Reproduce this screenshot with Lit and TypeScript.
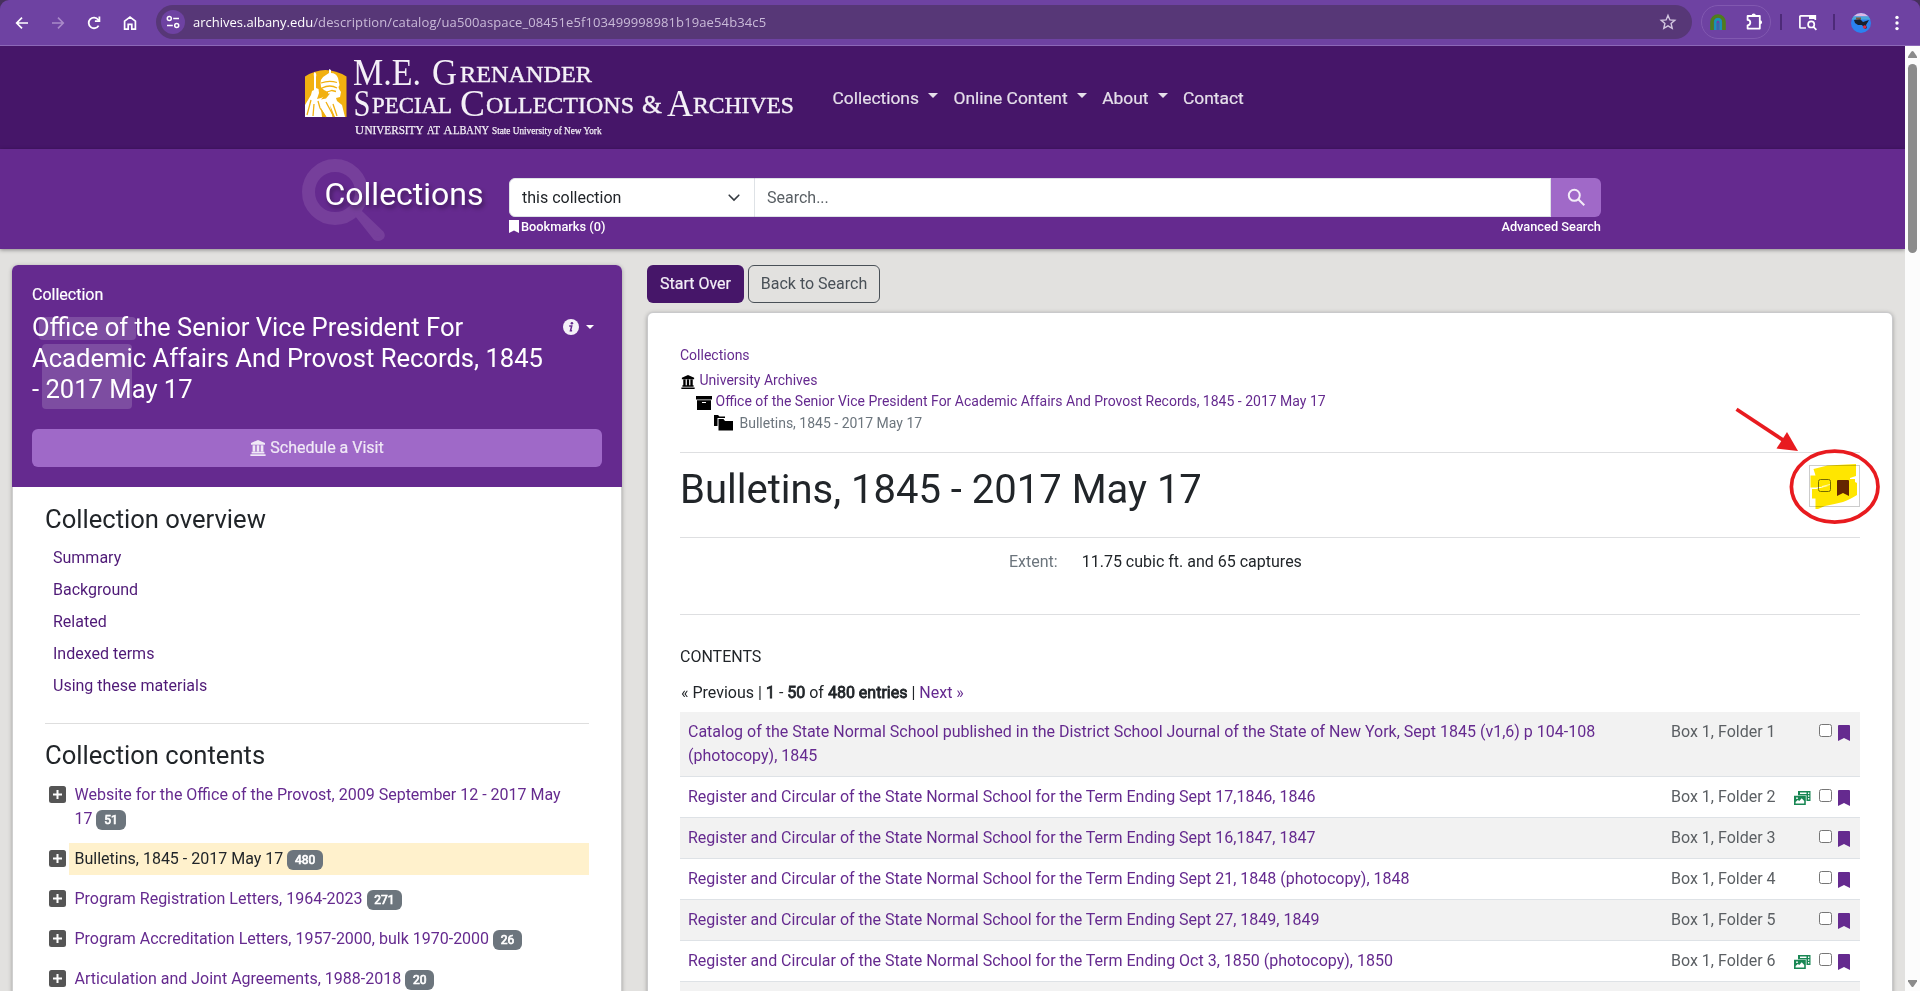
import { LitElement, html, css, svg } from "lit";
import { customElement } from "lit/decorators.js";
import { classMap } from "lit/directives/class-map.js";

interface TreeItem { title: string; count: number; active?: boolean; }
interface FolderRow { title: string; folder: number; online?: boolean; }

const tree: TreeItem[] = [
  { title: "Website for the Office of the Provost, 2009 September 12 - 2017 May 17", count: 51 },
  { title: "Bulletins, 1845 - 2017 May 17", count: 480, active: true },
  { title: "Program Registration Letters, 1964-2023", count: 271 },
  { title: "Program Accreditation Letters, 1957-2000, bulk 1970-2000", count: 26 },
  { title: "Articulation and Joint Agreements, 1988-2018", count: 20 },
];

const prefix = "Register and Circular of the State Normal School for the Term Ending ";
const rows: FolderRow[] = [
  { title: "Catalog of the State Normal School published in the District School Journal of the State of New York, Sept 1845 (v1,6) p 104-108 (photocopy), 1845", folder: 1 },
  { title: prefix + "Sept 17,1846, 1846", folder: 2, online: true },
  { title: prefix + "Sept 16,1847, 1847", folder: 3 },
  { title: prefix + "Sept 21, 1848 (photocopy), 1848", folder: 4 },
  { title: prefix + "Sept 27, 1849, 1849", folder: 5 },
  { title: prefix + "Oct 3, 1850 (photocopy), 1850", folder: 6, online: true },
];

const bookmark = html`<svg class="bm" viewBox="0 0 12 16" width="12" height="16"><path fill="currentColor" d="M1 0h10a1 1 0 0 1 1 1v15l-6-3-6 3V1a1 1 0 0 1 1-1z"/></svg>`;
const check = html`<svg class="ck" viewBox="0 0 13 13" width="13" height="13"><rect x=".5" y=".5" width="12" height="12" rx="2" fill="#fff" stroke="#767676"/></svg>`;
const bank = (w: number) => html`<svg class="bank" viewBox="0 0 16 16" width=${w} height=${w}><path fill="currentColor" d="M8 0l7 3v1.800H1V3zM2.600 5.200h2.700v6.400H2.600zM6.700 5.200h2.600v6.400H6.700zM10.700 5.200h2.700v6.400h-2.700zM1.600 11.800h12.800v1.700H1.600zM.4 14.200h15.200V16H.4z"/></svg>`;

/* Browser toolbar */
@customElement("browser-bar")
export class BrowserBar extends LitElement {
  static styles = css`
    :host { display: block; height: 46px; background: #46305c; }
    .bar { height: 45px; border-bottom: 1px solid #8c68b8; background: #6e42a2; border-radius: 9px 9px 0 0; display: flex; align-items: center; padding-bottom: 0; }
    .bar > * { flex: none; }
    .nav { width: 36px; display: flex; justify-content: center; }
    .navs { display: flex; padding-left: 4px; width: 156px; box-sizing: border-box; height: 44px; align-items: center; }
    .omni { width: 1536px; height: 34px; border-radius: 17px; background: #573777; display: flex; align-items: center; margin-top: -1px; box-sizing: border-box; padding: 0 15px 0 5px; }
    .site { width: 24px; height: 24px; border-radius: 12px; background: #6e42a2; display: flex; align-items: center; justify-content: center; }
    .url { flex: 1; margin-left: 8px; font: 13px/20px "Open Sans", "Noto Sans", sans-serif; color: #c9bad8; letter-spacing: 0.12px; white-space: nowrap; }
    .host { color: #fff; letter-spacing: 0; }
    .pill { margin-left: 9px; height: 32px; margin-top: -1px; border: 1px solid #8158b0; border-radius: 17px; display: flex; align-items: center; justify-content: space-between; padding: 0 6px 0 7px; width: 55px; }
    .sep { width: 2px; height: 16px; background: #4d2a78; margin-left: 9px; margin-top: -1px; }
    .panel { margin-left: 17px; }
    .sep2 { margin-left: 16px; }
    .avatar { margin-left: 16px; }
    .dots { margin-left: 24px; }
    svg { display: block; }
  `;
  render() {
    return html`<div class="bar">
      <div class="navs">
        <div class="nav"><svg width="16" height="16" viewBox="0 0 16 16" fill="none" stroke="#fff" stroke-width="1.7"><path d="M14 8H3M8 2.6L2.7 8 8 13.4"/></svg></div>
        <div class="nav"><svg width="16" height="16" viewBox="0 0 16 16" fill="none" stroke="#a98ac9" stroke-width="1.6"><path d="M2 8h11M8 2.6L13.3 8 8 13.4"/></svg></div>
        <div class="nav"><svg width="16" height="16" viewBox="0 0 16 16" fill="none" stroke="#fff" stroke-width="1.8"><path d="M12.6 10.6A5.3 5.3 0 1 1 12.2 4.7L13 5.6"/><path d="M13.4 1.6v4.5H8.9"/></svg></div>
        <div class="nav"><svg width="16" height="16" viewBox="0 0 16 16" fill="none" stroke="#fff" stroke-width="1.7"><path d="M2.6 14.1V6.2L8 2l5.4 4.2v7.9H9.8V9.4H6.2v4.7z"/></svg></div>
      </div>
      <div class="omni">
        <div class="site"><svg width="16" height="16" viewBox="0 0 16 16" fill="none" stroke="#fff" stroke-width="1.5"><circle cx="4.3" cy="4.6" r="2"/><path d="M8.2 4.6H14M2 11.4h5.8"/><circle cx="11.7" cy="11.4" r="2"/></svg></div>
        <div class="url"><span class="host">archives.albany.edu</span>/description/catalog/ua500aspace_08451e5f103499998981b19ae54b34c5</div>
        <svg width="18" height="18" viewBox="0 0 18 18" fill="none" stroke="#d3c7e0" stroke-width="1.4"><path d="M9 2.4l1.9 4.5 4.9.4-3.7 3.2 1.1 4.8L9 12.8l-4.2 2.5 1.1-4.8-3.7-3.2 4.9-.4z"/></svg>
      </div>
      <div class="pill">
        <svg width="18" height="18" viewBox="0 0 18 18" fill="none"><path d="M3 17V9a6 6 0 0 1 12 0v8" stroke="#4f7d1c" stroke-width="3.6"/><path d="M6.3 17V9a2.7 2.7 0 0 1 5.4 0v8" stroke="#1397b8" stroke-width="2.4"/><path d="M9 10v7" stroke="#1a7bb0" stroke-width="1.4"/></svg>
        <svg width="19" height="18" viewBox="0 0 19 18"><path d="M2.6 3h12.2v12.6H2.6v-3.3a2.6 2.6 0 0 0 0-5.4z" fill="none" stroke="#fff" stroke-width="1.8" stroke-linejoin="round"/><path d="M6.6 2.6a2.1 2.1 0 0 1 4.2 0zM15 7.2a2.1 2.1 0 0 1 0 4.2z" fill="#fff"/></svg>
      </div>
      <div class="sep"></div>
      <svg class="panel" width="18" height="17" viewBox="0 0 18 17" fill="none" stroke="#fff" stroke-width="1.7"><path d="M7 14H1.7a.8.8 0 0 1-.8-.8V2.6a.8.8 0 0 1 .8-.8h14.6V6"/><path d="M10 1h7v4h-7z" fill="#fff" stroke="none"/><circle cx="12.2" cy="10.4" r="3.1"/><path d="M14.4 12.8l3 3"/></svg>
      <div class="sep sep2"></div>
      <svg class="avatar" width="20" height="20" viewBox="0 0 20 20"><defs><clipPath id="a"><circle cx="10" cy="10" r="10"/></clipPath></defs><g clip-path="url(#a)"><path fill="#2b82f0" d="M0 0h20v20H0z"/><path fill="#dcb8e4" d="M0 0h20v3.5H0z"/><path fill="#4aa7d8" d="M0 3.5h20v3H0z"/><path fill="#17202e" d="M3 7l6-1 3 3 6-2-3 5 1 3-2 1-3-4-4 0-3-2z"/><path fill="#7b5a3a" d="M5 4.5h5v2H5z"/><circle cx="13.7" cy="14" r="1.8" fill="#d82c48"/></g></svg>
      <svg class="dots" width="4" height="16" viewBox="0 0 4 16" fill="#fff"><circle cx="2" cy="2.4" r="1.7"/><circle cx="2" cy="8" r="1.7"/><circle cx="2" cy="13.6" r="1.7"/></svg>
    </div>`;
  }
}

/* Site banner and search strip */
@customElement("site-header")
export class SiteHeader extends LitElement {
  static styles = css`
    :host { display: block; font-family: Roboto, sans-serif; position: relative; }
    .top { height: 103px; background: #461669; display: flex; }
    .logo { margin-left: 305px; width: 495px; height: 103px; display: block; flex: none; font-family: "Liberation Serif", serif; }
    nav { display: flex; margin-left: 32.5px; align-items: center; height: 104px; gap: 15px; font-size: 17.4px; color: #e5dfea; -webkit-text-stroke: 0.2px #e5dfea; }
    nav span { display: flex; align-items: center; white-space: nowrap; }
    .caret { margin-left: 9.5px; margin-top: -5px; border: 5px solid transparent; border-top-color: currentColor; border-bottom: 0; }
    .strip { height: 100px; background: #652a8f; display: flex; box-shadow: 0 1px 4px rgba(0,0,0,.4); }
    .title { margin-left: 302px; width: 207px; height: 100px; display: grid; flex: none; }
    .title > * { grid-area: 1 / 1; }
    .title h1 { margin: 27px 0 0 22.5px; font-size: 32px; line-height: 37px; font-weight: 400; color: #fff; text-shadow: 2px 3px 4px rgba(0,0,0,.4); }
    .form { width: 1092px; padding-top: 29px; }
    .row { display: flex; height: 39px; }
    .select { width: 246px; box-sizing: border-box; border: 1px solid #dee2e6; border-radius: 6px 0 0 6px; background: #fff; font-size: 16px; color: #212529; padding: 0 14px 0 12px; display: flex; align-items: center; justify-content: space-between; }
    .input { flex: 1; box-sizing: border-box; border: 1px solid #dee2e6; border-left: 0; background: #fff; color: #595f64; font-size: 16px; padding-left: 12px; display: flex; align-items: center; }
    .go { width: 50px; background: #a069c8; border-radius: 0 6px 6px 0; display: flex; align-items: center; justify-content: center; }
    .below { display: flex; justify-content: space-between; align-items: center; height: 18px; font-size: 12.8px; font-weight: 500; color: #fff; }
    .below span { display: flex; align-items: center; gap: 2px; }
    .below svg { margin-top: 1px; }
  `;
  render() {
    const item = (t: string, c = true) => html`<span>${t}${c ? html`<i class="caret"></i>` : ""}</span>`;
    const word = (x: number, y: number, size: number, len: number, t: string) =>
      svg`<text x=${x} y=${y} font-size=${size} textLength=${len} lengthAdjust="spacingAndGlyphs">${t}</text>`;
    return html`
      <div class="top">
        <svg class="logo" viewBox="305 46 495 103" fill="#f4f0f7">
          <path d="M305 76.500q20-13 41.500 0V117H305z" fill="#f2b010"/>
          <path fill="#fff" d="M305 117v-12l6-10 1-4 2-1v-13q-1-3 .5-5 2.500 1 1.500 5v11l2.500 1 .5 4-2 6 4-1 7-3v-3l-4-2-3-3q-2-9 5-12l3-2v-4l2 1v3q5 0 7 5l1.500 7-1 2 .5 2 2 3-1 5-4 1 1 3 5 4 3 12z"/>
          <path fill="none" stroke="#f2b010" stroke-width="1.300" d="M311 100l-4 15M318 101l2 7 6 9M314 104l-1 12M326 102l8 15M333 104l4 12M321 83q8-3 16-.5M322 88q8-4 15 0M327 92l5-1.500 4 1"/>
          <path fill="#f2b010" d="M326 93.500h4l-4 5-5 1zM321 108l5 9h-4zM330 105l5 12h-2.500z"/>
          ${word(353, 85, 38, 68, "M.E.")}${word(432, 85, 38, 25, "G")}
          <g stroke="#f4f0f7" stroke-width=".4">${word(460, 82, 23.500, 132, "RENANDER")}</g>
          ${word(353.500, 116, 38, 17, "S")}
          ${word(460, 116, 38, 25, "C")}
          ${word(667, 116, 38, 26, "A")}
          <g stroke="#f4f0f7" stroke-width=".4">
          ${word(372, 113, 23.500, 80, "PECIAL")}${word(486, 113, 23.500, 148, "OLLECTIONS")}${word(642, 113, 25, 20, "&")}${word(693, 113, 23.500, 101, "RCHIVES")}
          </g>
          <g stroke="#f4f0f7" stroke-width=".25">
          ${word(355, 134, 13, 9, "U")}${word(364.500, 134, 12, 59, "NIVERSITY")}${word(427, 134, 12, 13, "AT")}
          ${word(443.500, 134, 13, 9, "A")}${word(453, 134, 12, 36, "LBANY")}${word(492, 134, 11, 109.500, "State University of New York")}
          </g>
        </svg>
        <nav>${item("Collections")}${item("Online Content")}${item("About")}${item("Contact", false)}</nav>
      </div>
      <div class="strip">
        <div class="title">
          <svg width="90" height="100" viewBox="0 0 90 100" fill="none" stroke="#763f9b"><circle cx="33" cy="43" r="26.500" stroke-width="13"/><path d="M54 65l3-3 23 22q2 3-1 5t-6 0z" fill="#763f9b" stroke-width="4" stroke-linejoin="round"/></svg>
          <h1>Collections</h1>
        </div>
        <div class="form">
          <div class="row">
            <div class="select">this collection<svg width="12" height="8" viewBox="0 0 12 8" fill="none" stroke="#343a40" stroke-width="1.600" stroke-linecap="round"><path d="M1.200 1.200L6 6l4.800-4.800"/></svg></div>
            <div class="input">Search...</div>
            <div class="go"><svg width="19" height="19" viewBox="0 0 19 19" fill="none" stroke="#f3ecf8" stroke-width="2"><circle cx="7.300" cy="7.300" r="5.500"/><path d="M11.300 11.300l6 6"/></svg></div>
          </div>
          <div class="below">
            <span><svg width="10" height="13" viewBox="0 0 10 13"><path fill="#fff" d="M0 0h10v13l-5-2.500L0 13z"/></svg>Bookmarks (0)</span>
            <span>Advanced Search</span>
          </div>
        </div>
      </div>`;
  }
}

/* Left column with collection context */
@customElement("collection-sidebar")
export class CollectionSidebar extends LitElement {
  static styles = css`
    :host { display: block; width: 610px; font: 16px/24px Roboto, sans-serif; color: #212529; }
    .card { border-radius: 6px 6px 0 0; box-shadow: 0 1px 4px rgba(0,0,0,.3); background: #fff; height: 760px; }
    .head { background: #652a8f; color: #fff; border-radius: 6px 6px 0 0; height: 222px; box-sizing: border-box; padding: 18px 20px 0; }
    .label { -webkit-text-stroke: 0.2px #fff; }
    .row { display: flex; justify-content: space-between; margin-top: 5px; position: relative; }
    h2 { margin: 0; font-weight: 400; font-size: 25.6px; line-height: 31px; width: 515px; position: relative; }
    .mark { position: absolute; background: #7d4da1; border-radius: 4px; }
    .m1 { left: 7px; top: 5px; width: 97px; height: 23px; }
    .m2 { left: 10px; top: 32px; width: 90px; height: 65px; }
    .info { display: flex; align-items: center; height: 30px; gap: 7px; padding-right: 8px; }
    .caret { border: 4px solid transparent; border-top-color: #fff; border-bottom: 0; }
    .visit { margin-top: 24px; height: 38px; border-radius: 6px; background: #9f69c8; color: #f0e8f6; display: flex; align-items: center; justify-content: center; gap: 4px; -webkit-text-stroke: 0.2px #f0e8f6; }
    .body { padding: 17px 32px 0; border: 1px solid #cfcfcf; border-width: 0 1px; height: 521px; }
    h3 { margin: 0; font-weight: 400; font-size: 25.6px; line-height: 31px; }
    .links { margin-top: 7px; padding-left: 8px; color: #4f1a77; }
    .links div { height: 32px; line-height: 32px; }
    hr { border: 0; height: 1px; background: #dedede; margin: 21px 0 16px; }
    .tree { display: flex; flex-direction: column; gap: 8px; margin-top: 8px; }
    .item { display: flex; gap: 3px; padding-left: 4px; color: #652a8f; }
    .plus { width: 17px; height: 17px; margin-top: 7px; flex: none; }
    .text { flex: 1; padding: 4px 16px 4px 5.5px; }
    .active { background: #fff1cc; color: #212529; }
    .badge { display: inline-block; background: #6c757d; color: #fff; font-size: 12px; line-height: 12px; -webkit-text-stroke: 0.7px #fff; padding: 4.2px 7.8px; border-radius: 6px; }
  `;
  render() {
    return html`<div class="card">
      <div class="head">
        <div class="label">Collection</div>
        <div class="row">
          <i class="mark m1"></i><i class="mark m2"></i>
          <h2>Office of the Senior Vice President For Academic Affairs And Provost Records, 1845 - 2017 May 17</h2>
          <div class="info"><svg width="16" height="16" viewBox="0 0 16 16"><circle cx="8" cy="8" r="8" fill="#f5f1f8"/><circle cx="8.900" cy="4.200" r="1.300" fill="#652a8f"/><path d="M6.200 7h2.500l-1.200 4.700h1.600" fill="none" stroke="#652a8f" stroke-width="1.500"/></svg><i class="caret"></i></div>
        </div>
        <div class="visit">${bank(16)}Schedule a Visit</div>
      </div>
      <div class="body">
        <h3>Collection overview</h3>
        <div class="links">${["Summary", "Background", "Related", "Indexed terms", "Using these materials"].map((l) => html`<div>${l}</div>`)}</div>
        <hr />
        <h3>Collection contents</h3>
        <div class="tree">
          ${tree.map((t) => html`<div class="item">
            <svg class="plus" viewBox="0 0 17 17"><rect width="17" height="17" rx="2.500" fill="#555"/><path d="M8.500 4v9M4 8.500h9" stroke="#fff" stroke-width="2"/></svg>
            <div class=${classMap({ text: true, active: !!t.active })}>${t.title} <span class="badge">${t.count}</span></div>
          </div>`)}
        </div>
      </div>
    </div>`;
  }
}

/* Record view */
@customElement("record-view")
export class RecordView extends LitElement {
  static styles = css`
    :host { display: block; width: 1246px; font: 16px/24px Roboto, sans-serif; color: #212529; }
    .actions { display: flex; gap: 4px; }
    .btn { height: 38px; box-sizing: border-box; border-radius: 6px; display: flex; align-items: center; justify-content: center; }
    .start { width: 97px; background: #461669; color: #f3eef7; -webkit-text-stroke: 0.2px #f3eef7; }
    .back { width: 132px; border: 1px solid #495057; color: #495057; }
    .card { margin-top: 9px; height: 700px; background: #fff; border: 1px solid #c9c9cb; border-radius: 6px 6px 0 0; box-shadow: 0 1px 4px rgba(0,0,0,.3); box-sizing: border-box; padding: 32px 32px 0; }
    .crumbs { font-size: 14px; line-height: 21px; color: #652a8f; height: 107px; }
    .crumb { display: flex; height: 21.5px; white-space: nowrap; }
    .crumb svg { color: #000; flex: none; margin-top: 5px; }
    .c1 { margin-top: 3px; padding-left: 0.5px; gap: 5px; }
    .c1 svg { margin-top: 5px; }
    .c2 { padding-left: 16px; gap: 3.5px; }
    .c3 { padding-left: 34px; gap: 6.5px; color: #6c757d; }
    .c3 svg { margin-top: 2px; }
    .heading { border: 1px solid #dedfe1; border-width: 1px 0; height: 84px; display: flex; justify-content: space-between; align-items: flex-start; }
    h1 { margin: 13px 0 0; font-weight: 400; font-size: 40px; line-height: 48px; }
    .toggle { margin-top: 12px; width: 51px; height: 42px; box-sizing: border-box; border: 1px solid #ccc; display: flex; gap: 6px; padding: 13px 0 0 8px; color: #652a8f; }
    .extent { display: flex; gap: 24px; height: 77px; border-bottom: 1px solid #dedfe1; padding-left: 329px; box-sizing: border-box; padding-top: 12px; }
    .extent b { font-weight: 400; color: #6c757d; }
    .contents { margin-top: 30px; }
    .pager { margin-top: 12px; padding-left: 1px; }
    strong { font-weight: 400; -webkit-text-stroke: 0.8px currentColor; }
    .link { color: #652a8f; }
    .table { margin-top: 7px; }
    .row { display: flex; padding: 8px; border-bottom: 1px solid #dee2e6; height: 24px; }
    .row.tall { height: 48px; }
    .row:nth-child(odd) { background: #f2f2f2; }
    .name { width: 925px; color: #652a8f; }
    .box { margin-left: 58px; width: 107px; color: #5b5f63; white-space: nowrap; }
    .online { width: 33px; padding: 6px 0 0 16px; box-sizing: border-box; }
    .online svg { display: block; }
    .ck { margin: 4px 6px 0 8px; flex: none; }
    .bm { margin-top: 5px; color: #652a8f; flex: none; }
    .toggle .ck { margin: 0; }
    .toggle .bm { margin-top: 1px; }
  `;
  render() {
    const media = html`<svg width="17" height="14" viewBox="0 0 17 14"><path fill="#198754" d="M4 0h12.500v10h-4V4.200H4zM0 4.800h11.800V14H0z"/><path fill="#fff" d="M1.600 12.400v-1.500l2.200-2 1.500 1 2.400-2.600 2.500 2.600v2.500zM6 1.500h6.500V3H6zM14 1.500h1.300v1.400H14zM14 4.300h1.300v1.400H14zM14 7h1.300v1.400H14z"/><circle cx="3" cy="7.200" r=".9" fill="#fff"/></svg>`;
    return html`
      <div class="actions"><div class="btn start">Start Over</div><div class="btn back">Back to Search</div></div>
      <div class="card">
        <div class="crumbs">
          <div class="crumb">Collections</div>
          <div class="crumb c1">${bank(14)}<span>University Archives</span></div>
          <div class="crumb c2"><svg width="16" height="14" viewBox="0 0 16 14"><path d="M0 0h16v3.500H0zM1 4.300h14V14H1z"/><path d="M6 6h4v1H6z" fill="#fff"/></svg><span>Office of the Senior Vice President For Academic Affairs And Provost Records, 1845 - 2017 May 17</span></div>
          <div class="crumb c3"><svg width="19" height="16" viewBox="0 0 19 16"><path d="M0 0h4l1.500 1.500H11V3H3.500v8H0z"/><path d="M4.500 4h5l1.500 2h8v9.500H4.500z"/></svg><span>Bulletins, 1845 - 2017 May 17</span></div>
        </div>
        <div class="heading"><h1>Bulletins, 1845 - 2017 May 17</h1><div class="toggle">${check}${bookmark}</div></div>
        <div class="extent"><b>Extent:</b><span>11.75 cubic ft. and 65 captures</span></div>
        <div class="contents">CONTENTS</div>
        <div class="pager">« Previous | <strong>1</strong> - <strong>50</strong> of <strong>480 entries</strong> | <span class="link">Next »</span></div>
        <div class="table">
          ${rows.map((r, i) => html`<div class=${classMap({ row: true, tall: i === 0 })}>
            <div class="name">${r.title}</div><div class="box">Box 1, Folder ${r.folder}</div>
            <div class="online">${r.online ? media : ""}</div>${check}${bookmark}
          </div>`)}
          <div class="row"></div>
        </div>
      </div>`;
  }
}

@customElement("app-root")
export class AppRoot extends LitElement {
  static styles = css`
    :host { display: block; width: 1920px; height: 991px; overflow: hidden; position: relative; background: #e2e1df; }
    .view { display: flex; height: 945px; }
    .page { width: 1905px; overflow: hidden; }
    .cols { display: flex; padding: 16px 0 0 12px; gap: 25px; }
    .scroll { width: 15px; background: #fcfcfc; display: flex; flex-direction: column; align-items: center; padding-top: 5px; box-sizing: border-box; }
    .scroll svg { display: block; flex: none; }
    .thumb { width: 9px; height: 189px; margin-top: 6px; border-radius: 5px; background: #8b8b8b; }
    .down { margin-top: auto; margin-bottom: 4px; }
    .ink { position: absolute; left: 1720px; top: 400px; pointer-events: none; }
    .marker { position: absolute; left: 1800px; top: 460px; mix-blend-mode: multiply; }
  `;
  render() {
    return html`
      <browser-bar></browser-bar>
      <div class="view">
        <div class="page">
          <site-header></site-header>
          <div class="cols"><collection-sidebar></collection-sidebar><record-view></record-view></div>
        </div>
        <div class="scroll">
          <svg width="9" height="7" viewBox="0 0 9 7"><path fill="#8b8b8b" d="M3.500.6q1-1 2 0L9 5.500V7H0V5.500z"/></svg>
          <div class="thumb"></div>
          <svg class="down" width="9" height="7" viewBox="0 0 9 7"><path fill="#8b8b8b" d="M3.500 6.400q1 1 2 0L9 1.500V0H0v1.500z"/></svg>
        </div>
      </div>
      <svg class="marker" width="64" height="56" viewBox="1800 460 64 56"><path fill="#ffe600" d="M1813.500 469l14-3.500 28.500-1.500v12l-6 2v1h5v3l2 1v12q-8 5-14 7-8 2-18 4l-7 3h-2.500v-10.500h-3.500V489h4l12-3-12 1.500h-5.500V475.500h5z"/><path d="M1822 486.500l8-2" stroke="#fff" stroke-width=".7"/></svg>
      <svg class="ink" width="170" height="130" viewBox="1720 400 170 130" fill="none" stroke="#e81b1f"><ellipse cx="1834.700" cy="486.700" rx="43.300" ry="35.500" stroke-width="3.700"/><path d="M1736.500 409.300l50 33" stroke-width="3.700"/><path d="M1798 451l-21.500-2.500 10.500-16.500z" fill="#e81b1f" stroke="none"/></svg>`;
  }
}
